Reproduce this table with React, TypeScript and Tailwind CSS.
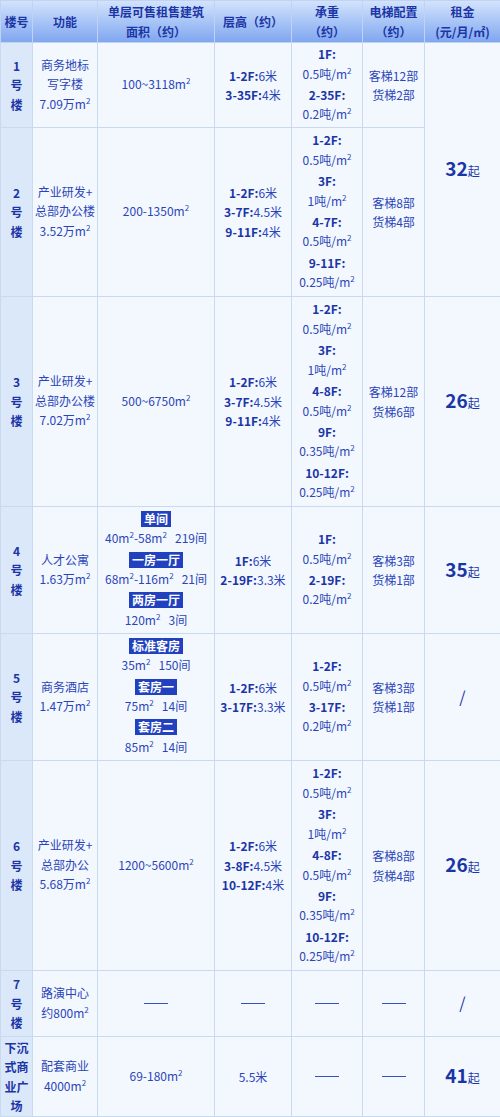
import type { ReactNode } from 'react';

// render "²" as a small raised glyph like the reference
function sq(s: ReactNode): ReactNode {
  if (typeof s !== 'string' || !s.includes('²')) return s;
  const parts = s.split('²');
  return parts.map((p, i) => (
    <span key={i}>
      {p}
      {i < parts.length - 1 && <span className="relative -top-[5px] text-[8px]">2</span>}
    </span>
  ));
}

const B = ({ children }: { children: ReactNode }) => <span className="font-bold text-[#1b35a6]">{children}</span>;

const Tag = ({ children }: { children: ReactNode }) => (
  <span className="inline-block bg-[#2141bf] px-[3px] leading-[16px] font-bold text-white">{children}</span>
);

function Lines({ items }: { items: ReactNode[] }) {
  return (
    <div className="flex flex-col items-center">
      {items.map((t, i) => (
        <div key={i} className="whitespace-nowrap">{sq(t)}</div>
      ))}
    </div>
  );
}

function Rent({ n }: { n: string }) {
  return (
    <span className="text-[#1b35a6]">
      <span className="text-[19px] font-bold">{n}</span>
      <span className="text-[12px]">起</span>
    </span>
  );
}

const Dash = () => <div className="mx-auto h-px w-[24px] bg-[#3650c0]" />;

const td = 'border border-[#c9d9ef] text-center align-middle p-0';
const first = 'border border-[#c9d9ef] bg-[#dbe8fa] text-center align-middle font-bold text-[#1b35a6] p-0';

const rows: {
  h: string;
  no: ReactNode;
  fn: string[];
  area: ReactNode;
  height: ReactNode;
  load: ReactNode;
  lift: ReactNode;
  rent?: ReactNode;
  rentSpan?: number;
}[] = [
  {
    h: 'h-[85px]',
    no: <Lines items={['1', '号', '楼']} />,
    fn: ['商务地标', '写字楼', '7.09万m²'],
    area: <Lines items={['100~3118m²']} />,
    height: <Lines items={[<><B>1-2F:</B>6米</>, <><B>3-35F:</B>4米</>]} />,
    load: <Lines items={[<B>1F:</B>, '0.5吨/m²', <B>2-35F:</B>, '0.2吨/m²']} />,
    lift: <Lines items={['客梯12部', '货梯2部']} />,
    rent: <Rent n="32" />,
    rentSpan: 2,
  },
  {
    h: 'h-[169px]',
    no: <Lines items={['2', '号', '楼']} />,
    fn: ['产业研发+', '总部办公楼', '3.52万m²'],
    area: <Lines items={['200-1350m²']} />,
    height: <Lines items={[<><B>1-2F:</B>6米</>, <><B>3-7F:</B>4.5米</>, <><B>9-11F:</B>4米</>]} />,
    load: (
      <Lines items={[<B>1-2F:</B>, '0.5吨/m²', <B>3F:</B>, '1吨/m²', <B>4-7F:</B>, '0.5吨/m²', <B>9-11F:</B>, '0.25吨/m²']} />
    ),
    lift: <Lines items={['客梯8部', '货梯4部']} />,
  },
  {
    h: 'h-[210px]',
    no: <Lines items={['3', '号', '楼']} />,
    fn: ['产业研发+', '总部办公楼', '7.02万m²'],
    area: <Lines items={['500~6750m²']} />,
    height: <Lines items={[<><B>1-2F:</B>6米</>, <><B>3-7F:</B>4.5米</>, <><B>9-11F:</B>4米</>]} />,
    load: (
      <Lines
        items={[<B>1-2F:</B>, '0.5吨/m²', <B>3F:</B>, '1吨/m²', <B>4-8F:</B>, '0.5吨/m²', <B>9F:</B>, '0.35吨/m²', <B>10-12F:</B>, '0.25吨/m²']}
      />
    ),
    lift: <Lines items={['客梯12部', '货梯6部']} />,
    rent: <Rent n="26" />,
  },
  {
    h: 'h-[127px]',
    no: <Lines items={['4', '号', '楼']} />,
    fn: ['人才公寓', '1.63万m²'],
    area: (
      <Lines
        items={[
          <Tag>单间</Tag>,
          '40m²-58m²\u00a0\u00a0\u00a0219间',
          <Tag>一房一厅</Tag>,
          '68m²-116m²\u00a0\u00a0\u00a021间',
          <Tag>两房一厅</Tag>,
          '120m²\u00a0\u00a0\u00a03间',
        ]}
      />
    ),
    height: <Lines items={[<><B>1F:</B>6米</>, <><B>2-19F:</B>3.3米</>]} />,
    load: <Lines items={[<B>1F:</B>, '0.5吨/m²', <B>2-19F:</B>, '0.2吨/m²']} />,
    lift: <Lines items={['客梯3部', '货梯1部']} />,
    rent: <Rent n="35" />,
  },
  {
    h: 'h-[127px]',
    no: <Lines items={['5', '号', '楼']} />,
    fn: ['商务酒店', '1.47万m²'],
    area: (
      <Lines
        items={[
          <Tag>标准客房</Tag>,
          '35m²\u00a0\u00a0\u00a0150间',
          <Tag>套房一</Tag>,
          '75m²\u00a0\u00a0\u00a014间',
          <Tag>套房二</Tag>,
          '85m²\u00a0\u00a0\u00a014间',
        ]}
      />
    ),
    height: <Lines items={[<><B>1-2F:</B>6米</>, <><B>3-17F:</B>3.3米</>]} />,
    load: <Lines items={[<B>1-2F:</B>, '0.5吨/m²', <B>3-17F:</B>, '0.2吨/m²']} />,
    lift: <Lines items={['客梯3部', '货梯1部']} />,
    rent: <span className="text-[16px] text-[#1b35a6]">/</span>,
  },
  {
    h: 'h-[210px]',
    no: <Lines items={['6', '号', '楼']} />,
    fn: ['产业研发+', '总部办公', '5.68万m²'],
    area: <Lines items={['1200~5600m²']} />,
    height: <Lines items={[<><B>1-2F:</B>6米</>, <><B>3-8F:</B>4.5米</>, <><B>10-12F:</B>4米</>]} />,
    load: (
      <Lines
        items={[<B>1-2F:</B>, '0.5吨/m²', <B>3F:</B>, '1吨/m²', <B>4-8F:</B>, '0.5吨/m²', <B>9F:</B>, '0.35吨/m²', <B>10-12F:</B>, '0.25吨/m²']}
      />
    ),
    lift: <Lines items={['客梯8部', '货梯4部']} />,
    rent: <Rent n="26" />,
  },
  {
    h: 'h-[66px]',
    no: <Lines items={['7', '号', '楼']} />,
    fn: ['路演中心', '约800m²'],
    area: <Dash />,
    height: <Dash />,
    load: <Dash />,
    lift: <Dash />,
    rent: <span className="text-[16px] text-[#1b35a6]">/</span>,
  },
  {
    h: 'h-[80px]',
    no: <Lines items={['下沉', '式商', '业广', '场']} />,
    fn: ['配套商业', '4000m²'],
    area: <Lines items={['69-180m²']} />,
    height: '5.5米',
    load: <Dash />,
    lift: <Dash />,
    rent: <Rent n="41" />,
  },
];

export default function App() {
  return (
    <div
      className="w-[500px] bg-[#f3f8ff] text-[12px] leading-[19.4px] text-[#2b45b8]"
      style={{ fontFamily: '"Noto Sans CJK SC", "Noto Sans", sans-serif' }}
    >
      <table className="w-[500px] table-fixed border-collapse">
        <colgroup>
          <col className="w-[32px]" />
          <col className="w-[65px]" />
          <col className="w-[117px]" />
          <col className="w-[77px]" />
          <col className="w-[71px]" />
          <col className="w-[62px]" />
          <col className="w-[76px]" />
        </colgroup>
        <thead>
          <tr className="h-[42px] bg-gradient-to-b from-[#d3e3fc] to-[#7ea5ef] font-bold text-[#1b35a6]">
            <th className="border border-[#c0d3f3] p-0">楼号</th>
            <th className="border border-[#c0d3f3] p-0">功能</th>
            <th className="border border-[#c0d3f3] p-0">
              单层可售租售建筑
              <br />
              面积（约）
            </th>
            <th className="border border-[#c0d3f3] p-0">层高（约）</th>
            <th className="border border-[#c0d3f3] p-0">
              承重
              <br />
              （约）
            </th>
            <th className="border border-[#c0d3f3] p-0">
              电梯配置
              <br />
              （约）
            </th>
            <th className="border border-[#c0d3f3] p-0">
              租金
              <br />
              (元/月/㎡)
            </th>
          </tr>
        </thead>
        <tbody>
          {rows.map((r, i) => (
            <tr key={i} className={r.h}>
              <td className={first}>{r.no}</td>
              <td className={td}>
                <Lines items={r.fn} />
              </td>
              <td className={td}>{r.area}</td>
              <td className={td}>{r.height}</td>
              <td className={td}>{r.load}</td>
              <td className={td}>{r.lift}</td>
              {r.rent !== undefined && (
                <td className={td} rowSpan={r.rentSpan ?? 1}>
                  {r.rent}
                </td>
              )}
            </tr>
          ))}
        </tbody>
      </table>
    </div>
  );
}
